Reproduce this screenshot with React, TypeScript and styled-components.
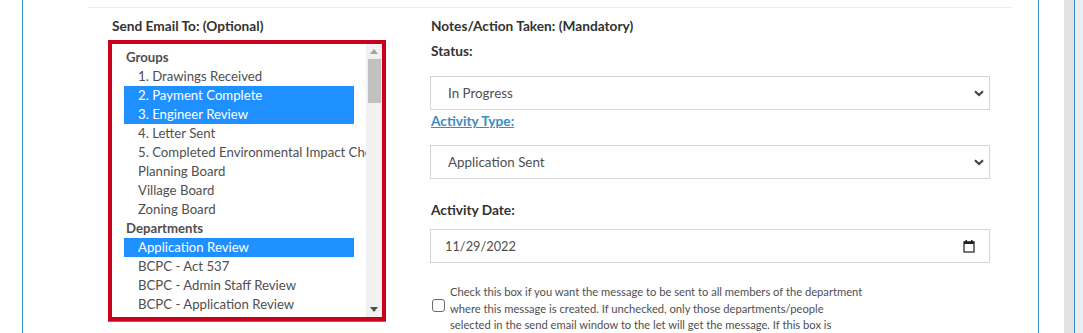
import React from "react";
import styled, { createGlobalStyle } from "styled-components";

const GlobalStyle = createGlobalStyle`
  html, body {
    margin: 0;
    padding: 0;
    background: #ffffff;
    font-family: "Lato", "Liberation Sans", sans-serif;
    overflow: hidden;
  }
`;

const BLUE = "#3a8dc1";

// page frame
const Page = styled.div`
  display: flex;
  height: 333px;
  width: 1083px;
  overflow: hidden;
`;

const LeftGutter = styled.div`
  width: 22px;
  border-right: 1px solid ${BLUE};
`;

const Panel = styled.div`
  width: 1015px;
  border-right: 1px solid ${BLUE};
`;

const RightGap = styled.div`
  width: 25px;
`;

const ScrollStrip = styled.div`
  width: 10px;
  background: #e3e3e3;
  border-right: 1px solid ${BLUE};
`;

const Edge = styled.div`
  flex: 1;
  background: #e9eef5;
`;

const Content = styled.div`
  margin: 7px 26px 0 65px;
  border-top: 1px solid #eeeeee;
  padding: 9px 0 0 20px;
  display: flex;
  gap: 44px;
`;

// columns
const EmailColumn = styled.div`
  width: 278px;
  display: flex;
  flex-direction: column;
`;

const NotesColumn = styled.div`
  width: 560px;
  display: flex;
  flex-direction: column;
`;

const Label = styled.div<{ $top?: number; $bottom?: number; $link?: boolean; $indent?: number }>`
  font-size: 13.7px;
  line-height: 18px;
  font-weight: 700;
  color: ${(p) => (p.$link ? "#3a8dc1" : "#333333")};
  text-decoration: ${(p) => (p.$link ? "underline" : "none")};
  margin-top: ${(p) => p.$top ?? 0}px;
  margin-bottom: ${(p) => p.$bottom ?? 0}px;
  padding-left: ${(p) => p.$indent ?? 1}px;
`;

// multi-select list box
const ListFrame = styled.div`
  height: 273px;
  border: 4px solid #c9001b;
  display: flex;
  box-shadow: 0 1px 0 ${BLUE};
`;

const ListArea = styled.div`
  flex: 1;
  overflow: hidden;
  padding: 4px 12px 0 12px;
`;

const Row = styled.div<{ $group?: boolean; $selected?: boolean }>`
  height: 19px;
  line-height: 19px;
  font-size: 13.2px;
  white-space: nowrap;
  width: 230px;
  padding-left: ${(p) => (p.$group ? 2 : 14)}px;
  box-sizing: border-box;
  font-weight: ${(p) => (p.$group ? 700 : 400)};
  color: ${(p) => (p.$selected ? "#ffffff" : "#4f4f4f")};
  background: ${(p) => (p.$selected ? "#1e90ff" : "transparent")};
`;

const Scrollbar = styled.div`
  width: 16px;
  background: #f1f1f1;
  display: flex;
  flex-direction: column;
  align-items: center;
`;

const ArrowButton = styled.div<{ $down?: boolean }>`
  height: 15px;
  width: 100%;
  display: flex;
  align-items: center;
  justify-content: center;
  margin-top: ${(p) => (p.$down ? "auto" : "0")};
`;

const Thumb = styled.div`
  width: 13px;
  height: 44px;
  margin-left: 1px;
  background: #c1c1c1;
`;

// form fields
const Field = styled.div<{ $top?: number; $padLeft?: number; $padRight?: number }>`
  height: 34px;
  box-sizing: border-box;
  border: 1px solid #d3d4dc;
  display: flex;
  align-items: center;
  justify-content: space-between;
  padding: 0 ${(p) => p.$padRight ?? 5}px 0 ${(p) => p.$padLeft ?? 17}px;
  margin-top: ${(p) => p.$top ?? 0}px;
  font-size: 13.4px;
  color: #4f4f4f;
`;

const DateText = styled.span`
  font-size: 12.8px;
`;

const CheckRow = styled.div`
  display: flex;
  align-items: flex-start;
  margin-top: 21px;
`;

const CheckBox = styled.div`
  width: 11px;
  height: 11px;
  border: 1px solid #6b6b6b;
  border-radius: 3px;
  margin: 15px 5px 0 2px;
  flex-shrink: 0;
`;

const CheckText = styled.div`
  width: 414px;
  font-size: 11.2px;
  line-height: 16.5px;
  color: #4f4f4f;
`;

const Chevron = () => (
  <svg width="10" height="7" viewBox="0 0 10 7">
    <path d="M1 1.2 L5 5 L9 1.2" fill="none" stroke="#444" strokeWidth="2.2" />
  </svg>
);

const CalendarIcon = () => (
  <svg width="12" height="14" viewBox="0 0 12 14">
    <rect x="1" y="3" width="10" height="10" fill="none" stroke="#555" strokeWidth="1.6" />
    <rect x="1" y="2.5" width="10" height="2.5" fill="#222" />
    <rect x="2.5" y="1" width="1.5" height="2" fill="#222" />
    <rect x="8" y="1" width="1.5" height="2" fill="#222" />
  </svg>
);

type Item = { text: string; group?: boolean; selected?: boolean };

const items: Item[] = [
  { text: "Groups", group: true },
  { text: "1. Drawings Received" },
  { text: "2. Payment Complete", selected: true },
  { text: "3. Engineer Review", selected: true },
  { text: "4. Letter Sent" },
  { text: "5. Completed Environmental Impact Checklist" },
  { text: "Planning Board" },
  { text: "Village Board" },
  { text: "Zoning Board" },
  { text: "Departments", group: true },
  { text: "Application Review", selected: true },
  { text: "BCPC - Act 537" },
  { text: "BCPC - Admin Staff Review" },
  { text: "BCPC - Application Review" },
  { text: "BCPC - Board Review" },
];

export default function App() {
  return (
    <>
      <GlobalStyle />
      <Page>
        <LeftGutter />
        <Panel>
          <Content>
            <EmailColumn>
              <Label $bottom={5} $indent={4}>Send Email To: (Optional)</Label>
              <ListFrame>
                <ListArea>
                  {items.map((it) => (
                    <Row key={it.text} $group={it.group} $selected={it.selected}>
                      {it.text}
                    </Row>
                  ))}
                </ListArea>
                <Scrollbar>
                  <ArrowButton>
                    <svg width="8" height="5" viewBox="0 0 8 5">
                      <path d="M0 5 L4 0 L8 5 Z" fill="#a3a3a3" />
                    </svg>
                  </ArrowButton>
                  <Thumb />
                  <ArrowButton $down>
                    <svg width="8" height="5" viewBox="0 0 8 5">
                      <path d="M0 0 L4 5 L8 0 Z" fill="#505050" />
                    </svg>
                  </ArrowButton>
                </Scrollbar>
              </ListFrame>
            </EmailColumn>
            <NotesColumn>
              <Label>Notes/Action Taken: (Mandatory)</Label>
              <Label $top={7}>Status:</Label>
              <Field $top={16}>
                <span>In Progress</span>
                <Chevron />
              </Field>
              <Label $top={2} $link>Activity Type:</Label>
              <Field $top={15}>
                <span>Application Sent</span>
                <Chevron />
              </Field>
              <Label $top={22}>Activity Date:</Label>
              <Field $top={10} $padLeft={14} $padRight={14}>
                <DateText>11/29/2022</DateText>
                <CalendarIcon />
              </Field>
              <CheckRow>
                <CheckBox />
                <CheckText>
                  Check this box if you want the message to be sent to all members of the department
                  where this message is created. If unchecked, only those departments/people
                  selected in the send email window to the let will get the message. If this box is
                  checked, every member of the department will receive the message.
                </CheckText>
              </CheckRow>
            </NotesColumn>
          </Content>
        </Panel>
        <RightGap />
        <ScrollStrip />
        <Edge />
      </Page>
    </>
  );
}
